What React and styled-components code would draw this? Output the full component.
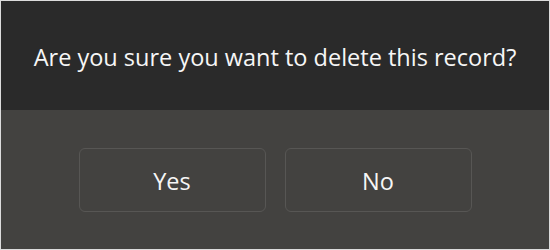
import React from 'react'
import styled, { createGlobalStyle } from 'styled-components'

const GlobalStyle = createGlobalStyle`
  html, body {
    margin: 0;
    padding: 0;
    background: #ffffff;
  }
  * {
    box-sizing: border-box;
  }
`

const Dialog = styled.div`
  width: 550px;
  height: 250px;
  display: flex;
  flex-direction: column;
  border: 1px solid #dcdcdc;
  background: #434240;
  font-family: 'Open Sans', 'Noto Sans', sans-serif;
  color: #f6f6f6;
`

const Header = styled.div`
  height: 109px;
  display: flex;
  align-items: center;
  justify-content: center;
  padding-top: 3px;
  background: #2a2a2a;
  font-size: 23.5px;
`

const Actions = styled.div`
  flex: 1;
  display: flex;
  justify-content: center;
  align-items: flex-start;
  gap: 19px;
  padding-top: 38px;
`

const Button = styled.button`
  width: 187px;
  height: 64px;
  padding: 2px 0 0;
  border: 1px solid #575654;
  border-radius: 6px;
  background: transparent;
  color: #f6f6f6;
  font-family: inherit;
  font-size: 23.5px;
  cursor: pointer;
`

export default function App() {
  return (
    <>
      <GlobalStyle />
      <Dialog>
        <Header>Are you sure you want to delete this record?</Header>
        <Actions>
          <Button>Yes</Button>
          <Button>No</Button>
        </Actions>
      </Dialog>
    </>
  )
}
